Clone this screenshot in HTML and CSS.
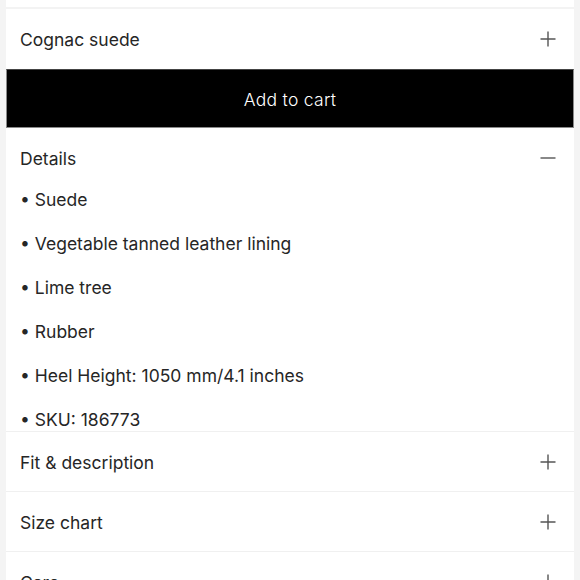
FILE: index.html
```html
<!DOCTYPE html>
<html lang="en">
<head>
<meta charset="utf-8">
<link rel="stylesheet" href="styles.css">
</head>
<body>
<div class="page">
  <div class="stub"></div>
  <div class="row first">
    <span class="label">Cognac suede</span>
    <svg class="icon" viewBox="0 0 16 16"><path d="M8 0.5V15.5M0.5 8H15.5"/></svg>
  </div>
  <button class="cart">Add to cart</button>
  <div class="details">
    <div class="row plain">
      <span class="label">Details</span>
      <svg class="icon" viewBox="0 0 16 16"><path d="M0.5 8H15.5"/></svg>
    </div>
    <ul class="list">
      <li>• Suede</li>
      <li>• Vegetable tanned leather lining</li>
      <li>• Lime tree</li>
      <li>• Rubber</li>
      <li>• Heel Height: 1050 mm/4.1 inches</li>
      <li>• SKU: 186773</li>
    </ul>
  </div>
  <div class="row">
    <span class="label">Fit &amp; description</span>
    <svg class="icon" viewBox="0 0 16 16"><path d="M8 0.5V15.5M0.5 8H15.5"/></svg>
  </div>
  <div class="row">
    <span class="label">Size chart</span>
    <svg class="icon" viewBox="0 0 16 16"><path d="M8 0.5V15.5M0.5 8H15.5"/></svg>
  </div>
  <div class="row">
    <span class="label">Care</span>
    <svg class="icon" viewBox="0 0 16 16"><path d="M8 0.5V15.5M0.5 8H15.5"/></svg>
  </div>
</div>
</body>
</html>
```
FILE: styles.css
```css
*, *::before, *::after {
  box-sizing: border-box;
}
html, body {
  margin: 0;
  padding: 0;
  background: #f4f4f4;
}
body {
  font-family: Inter, "Noto Sans", sans-serif;
  color: #222;
  height: 580px;
  overflow: hidden;
}
.page {
  margin: 0 6px;
  background: #f3f3f3;
  display: flex;
  flex-direction: column;
}
.stub {
  height: 7px;
  background: #fff;
  margin-bottom: 2px;
}
.row {
  height: 60px;
  background: #fff;
  display: flex;
  align-items: center;
  justify-content: space-between;
  padding: 1px 18px 0 14px;
  border-bottom: 1px solid #f0f0f0;
  flex-shrink: 0;
}
.row.first, .row.plain {
  padding-top: 0;
  border-bottom: none;
}
.label {
  font-size: 17.5px;
  font-weight: 400;
  color: #262626;
}
.icon {
  width: 16px;
  height: 16px;
  fill: none;
  stroke: #555;
  stroke-width: 1.4;
}
.cart {
  height: 59px;
  background: #000;
  color: #fff;
  border: 1px solid #8a8a8a;
  border-top-color: #444;
  font-family: Inter, "Noto Sans", sans-serif;
  font-size: 17.5px;
  font-weight: 300;
  letter-spacing: 0.3px;
  padding: 1px 0 0;
  flex-shrink: 0;
}
.details {
  background: #fff;
  border-bottom: 1px solid #f0f0f0;
}
.list {
  list-style: none;
  margin: 0;
  padding: 1px 0 0 14px;
  color: #262626;
}
.list li {
  font-size: 17.5px;
  line-height: 22px;
  height: 22px;
  margin-bottom: 22px;
}
.list li:last-child {
  margin-bottom: 0;
}
```
